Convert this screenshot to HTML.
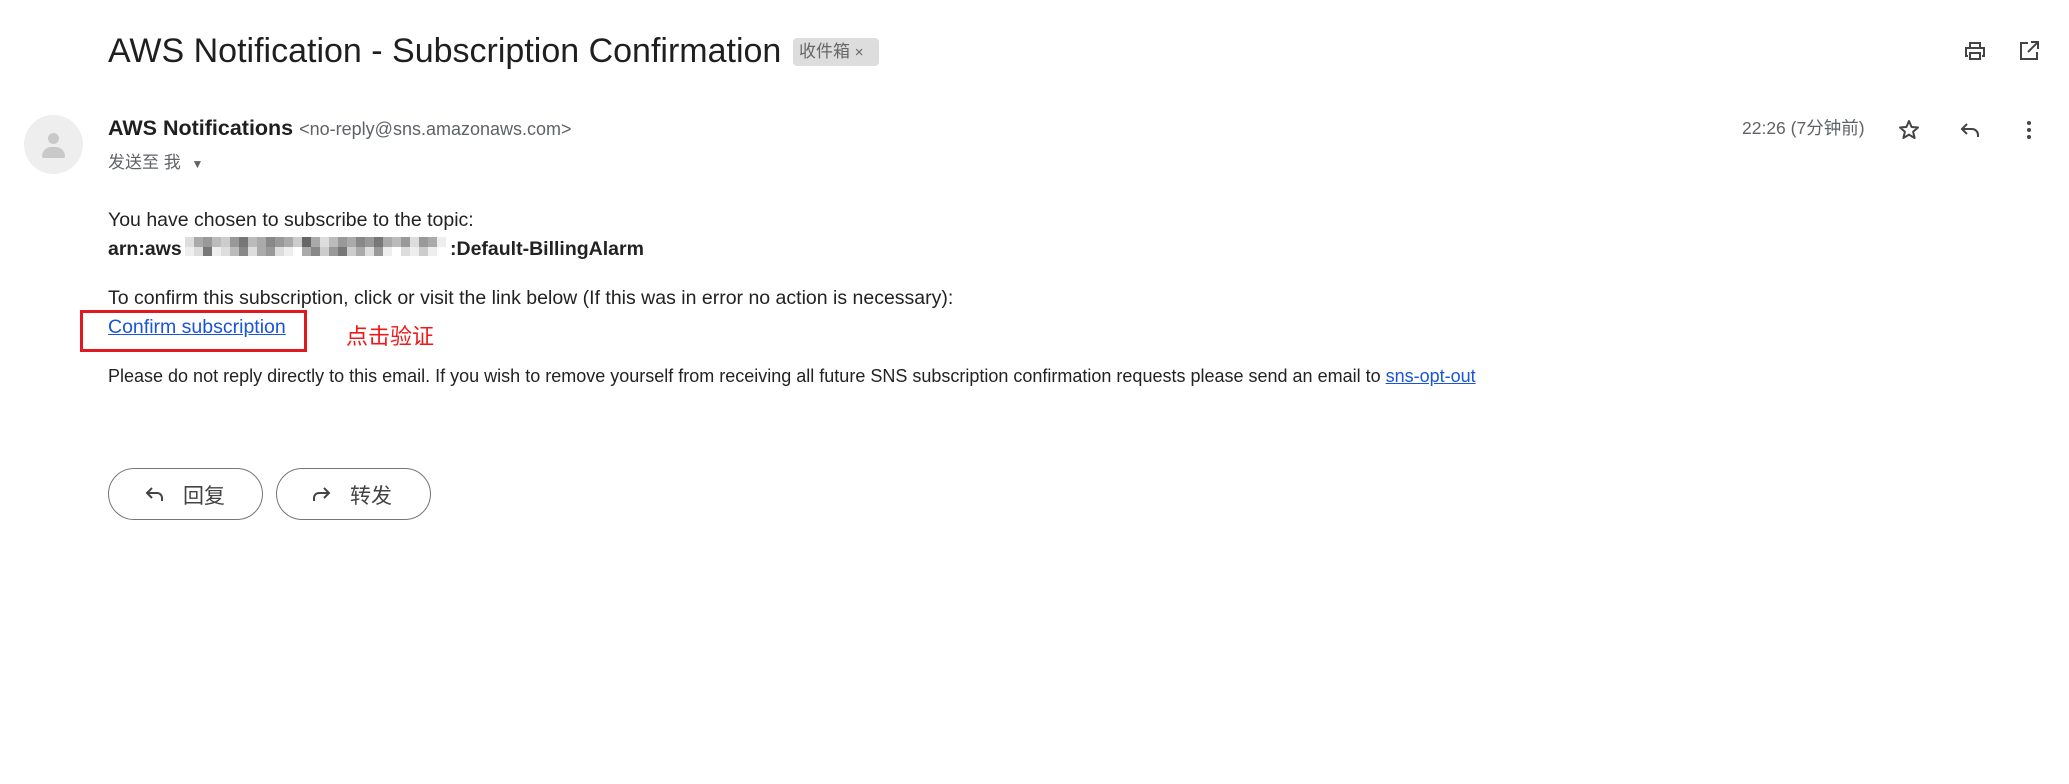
<!DOCTYPE html>
<html><head><meta charset="utf-8">
<style>
body{margin:0;width:2069px;height:784px;background:#fff;position:relative;font-family:"Liberation Sans","Noto Sans CJK SC",sans-serif;color:#222;overflow:hidden}
.a{position:absolute;white-space:nowrap}
.pix{position:absolute;top:237px;left:185px;display:grid;grid-template-columns:repeat(29,9px);grid-auto-rows:9.5px}
.btn{position:absolute;top:468px;height:52px;width:155px;border:1px solid #747775;border-radius:27px;box-sizing:border-box;font-size:21px;color:#444}
</style></head><body>
<div class="a" style="left:108px;top:32px;font-size:34px;color:#1f1f1f">AWS Notification - Subscription Confirmation</div>
<div class="a" style="left:793px;top:38px;width:86px;height:28px;background:#ddd;border-radius:4px;font-size:17px;color:#666;line-height:28px;text-indent:6px">收件箱 <span style="font-size:15px">×</span></div>
<svg class="a" style="left:1963px;top:39px" width="24" height="24" viewBox="0 0 24 24"><path fill="none" stroke="#444" stroke-width="2" d="M7 8V4h10v4M5 17H3V9h18v8h-2M7 14h10v6H7z"/></svg>
<svg class="a" style="left:2017px;top:39px" width="24" height="24" viewBox="0 0 24 24"><path fill="none" stroke="#444" stroke-width="2" d="M11 4H4v16h16v-7M14 3h7v7M21 3l-10 10"/></svg>
<div class="a" style="left:24px;top:115px;width:59px;height:59px;border-radius:50%;background:#eee"></div>
<div class="a" style="left:48px;top:133px;width:11px;height:11px;border-radius:50%;background:#c9c9c9"></div>
<div class="a" style="left:42px;top:147px;width:23px;height:11px;border-radius:11px 11px 2px 2px;background:#c9c9c9"></div>
<div class="a" style="left:108px;top:116px;font-size:21.5px;font-weight:bold;color:#1f1f1f">AWS Notifications <span style="font-weight:normal;font-size:18px;color:#5f6368">&lt;no-reply@sns.amazonaws.com&gt;</span></div>
<div class="a" style="left:108px;top:148px;font-size:17px;color:#5f6368">发送至 我 <span style="font-size:12px;margin-left:6px">▼</span></div>
<div class="a" style="left:1742px;top:115px;font-size:17.5px;color:#5f6368">22:26 (7分钟前)</div>
<svg class="a" style="left:1897px;top:118px" width="24" height="24" viewBox="0 0 24 24"><path fill="none" stroke="#444" stroke-width="2" stroke-linejoin="round" d="M12 3l2.6 6 6.4.5-4.9 4.2 1.5 6.3L12 16.6 6.4 20l1.5-6.3L3 9.5l6.4-.5z"/></svg>
<svg class="a" style="left:1958px;top:118px" width="24" height="24" viewBox="0 0 24 24"><path fill="none" stroke="#444" stroke-width="2" d="M9 6l-5 5 5 5M4 11h10a6 6 0 0 1 6 6v2"/></svg>
<svg class="a" style="left:2017px;top:118px" width="24" height="24" viewBox="0 0 24 24"><circle cx="12" cy="5" r="2" fill="#444"/><circle cx="12" cy="12" r="2" fill="#444"/><circle cx="12" cy="19" r="2" fill="#444"/></svg>
<div class="a" style="left:108px;top:209px;font-size:19.5px">You have chosen to subscribe to the topic:</div>
<div class="a" style="left:108px;top:238px;font-size:19.5px;font-weight:bold">arn:aws</div>
<div class="pix">
<i style="background:#ddd"></i><i style="background:#aaa"></i><i style="background:#999"></i><i style="background:#bbb"></i><i style="background:#ccc"></i><i style="background:#999"></i><i style="background:#777"></i><i style="background:#bbb"></i><i style="background:#aaa"></i><i style="background:#888"></i><i style="background:#999"></i><i style="background:#aaa"></i><i style="background:#ccc"></i><i style="background:#666"></i><i style="background:#aaa"></i><i style="background:#ddd"></i><i style="background:#bbb"></i><i style="background:#999"></i><i style="background:#aaa"></i><i style="background:#888"></i><i style="background:#999"></i><i style="background:#777"></i><i style="background:#aaa"></i><i style="background:#bbb"></i><i style="background:#999"></i><i style="background:#ddd"></i><i style="background:#999"></i><i style="background:#aaa"></i><i style="background:#eee"></i>
<i style="background:#eee"></i><i style="background:#ddd"></i><i style="background:#777"></i><i style="background:#eee"></i><i style="background:#ddd"></i><i style="background:#bbb"></i><i style="background:#888"></i><i style="background:#ddd"></i><i style="background:#aaa"></i><i style="background:#999"></i><i style="background:#ddd"></i><i style="background:#eee"></i><i style="background:#fff"></i><i style="background:#aaa"></i><i style="background:#888"></i><i style="background:#ccc"></i><i style="background:#999"></i><i style="background:#777"></i><i style="background:#ccc"></i><i style="background:#aaa"></i><i style="background:#ddd"></i><i style="background:#999"></i><i style="background:#eee"></i><i style="background:#fff"></i><i style="background:#ddd"></i><i style="background:#eee"></i><i style="background:#ccc"></i><i style="background:#eee"></i><i style="background:#fff"></i>
</div>
<div class="a" style="left:450px;top:238px;font-size:19.5px;font-weight:bold">:Default-BillingAlarm</div>
<div class="a" style="left:108px;top:287px;font-size:19.5px">To confirm this subscription, click or visit the link below (If this was in error no action is necessary):</div>
<div class="a" style="left:108px;top:316px;font-size:19.5px;color:#1a55d6;text-decoration:underline">Confirm subscription</div>
<div class="a" style="left:80px;top:310px;width:227px;height:42px;border:3px solid #e0181f;box-sizing:border-box"></div>
<div class="a" style="left:346px;top:319px;font-size:22px;color:#f01818">点击验证</div>
<div class="a" style="left:108px;top:366px;font-size:18px">Please do not reply directly to this email. If you wish to remove yourself from receiving all future SNS subscription confirmation requests please send an email to <span style="color:#1a55d6;text-decoration:underline">sns-opt-out</span></div>
<div class="btn" style="left:108px"><svg class="a" style="left:34px;top:13px" width="24" height="24" viewBox="0 0 24 24"><path fill="none" stroke="#444" stroke-width="2" d="M9 6l-5 5 5 5M4 11h10a5 5 0 0 1 5 5v3"/></svg><span class="a" style="left:74px;top:11px">回复</span></div>
<div class="btn" style="left:276px"><svg class="a" style="left:32px;top:13px" width="24" height="24" viewBox="0 0 24 24"><path fill="none" stroke="#444" stroke-width="2" d="M15 6l5 5-5 5M20 11H10a5 5 0 0 0-5 5v3"/></svg><span class="a" style="left:73px;top:11px">转发</span></div>
</body></html>
